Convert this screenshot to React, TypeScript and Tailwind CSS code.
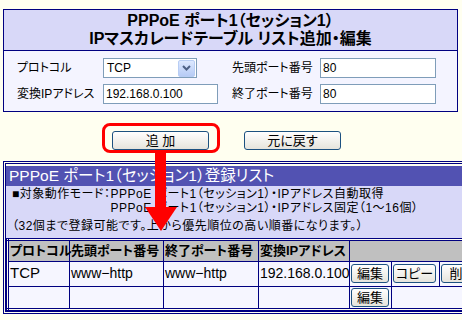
import React from 'react'

const font = "font-['Liberation_Sans','Noto_Sans_CJK_JP',sans-serif] [font-feature-settings:'palt']"

function XpButton({ label, className }: { label: string; className: string }) {
  return (
    <button
      className={`flex items-center justify-center rounded-[3px] border border-[#1c5180] bg-linear-to-b from-white to-[#e6e4dc] text-[13px] leading-none text-black ${className}`}
    >
      {label}
    </button>
  )
}

function Chevron() {
  return (
    <span className="flex h-[17px] w-[17px] items-center justify-center rounded-[2px] border border-[#b8cdf4] bg-linear-to-b from-[#dce8ff] to-[#b7cbf5]">
      <svg width="9" height="6" viewBox="0 0 9 6">
        <path d="M1 1 L4.5 4.5 L8 1" fill="none" stroke="#4d6185" strokeWidth="2" />
      </svg>
    </span>
  )
}

export default function App() {
  const td = 'border border-[#000080] px-[1px] whitespace-nowrap'
  return (
    <div className={`relative h-[320px] w-[462px] overflow-hidden bg-[#fffff0] ${font}`}>
      {/* edit form */}
      <div className="ml-[3px] mt-[9px] w-[455px] border border-[#000080]">
        <div className="flex h-[41px] flex-col items-center justify-center border-b border-[#000080] bg-[#d8d8f8] text-[16px] font-bold leading-[18px] text-black">
          <div>PPPoE ポート1（セッション1）</div>
          <div>IPマスカレードテーブル リスト追加・編集</div>
        </div>
        <div className="grid grid-cols-[86px_129px_88px_116px] gap-y-[6px] bg-[#f4f4ff] pb-[7px] pl-[13px] pt-[7px] text-[12px] text-black">
          <div className="flex items-center">プロトコル</div>
          <div className="flex h-[20px] w-[94px] items-center justify-between border border-[#7f9db9] bg-white pl-[3px] pr-[1px]">
            <span>TCP</span>
            <Chevron />
          </div>
          <div className="flex items-center">先頭ポート番号</div>
          <div className="flex h-[20px] items-center border border-[#7f9db9] bg-white pl-[2px]">80</div>
          <div className="flex items-center">変換IPアドレス</div>
          <div className="flex h-[20px] w-[115px] items-center border border-[#7f9db9] bg-white pl-[2px]">192.168.0.100</div>
          <div className="flex items-center">終了ポート番号</div>
          <div className="flex h-[20px] items-center border border-[#7f9db9] bg-white pl-[2px]">80</div>
        </div>
      </div>

      {/* buttons */}
      <div className="mt-[19px] flex gap-[35px] pl-[112px]">
        <XpButton label="追 加" className="h-[19px] w-[97px]" />
        <XpButton label="元に戻す" className="h-[19px] w-[97px]" />
      </div>

      {/* list */}
      <div className="ml-[3px] mt-[11px] w-[500px] border-[3px] border-double border-[#000080] pt-[2px]">
        <div className="flex h-[20px] items-center bg-[#5252b2] pl-[3px] text-[15.5px] leading-none text-white">
          PPPoE ポート1（セッション1）登録リスト
        </div>
        <div className="h-[52px] bg-[#d8d8f8] pl-[6px] pt-[1px] text-[12px] leading-[14px] tracking-[0.5px] text-black">
          <div>■対象動作モード：PPPoE ポート1（セッション1）・IPアドレス自動取得</div>
          <div>
            <span className="invisible">■対象動作モード：</span>PPPoE ポート1（セッション1）・IPアドレス固定（1〜16個）
          </div>
          <div className="mt-[4px]">（32個まで登録可能です。上から優先順位の高い順番になります。）</div>
        </div>
        <table className="w-[490px] table-fixed border-collapse border-[3px] border-double border-[#000080] text-black">
          <colgroup>
            <col className="w-[62px]" />
            <col className="w-[94px]" />
            <col className="w-[95px]" />
            <col className="w-[91px]" />
            <col className="w-[42px]" />
            <col className="w-[48px]" />
            <col />
          </colgroup>
          <tbody>
            <tr className="h-[21px] bg-[#c0c0c0] text-[13px] font-bold">
              <td className={td}>プロトコル</td>
              <td className={td}>先頭ポート番号</td>
              <td className={td}>終了ポート番号</td>
              <td className={td}>変換IPアドレス</td>
              <td className={td} colSpan={3}></td>
            </tr>
            <tr className="h-[25px] bg-[#f6f6ff] text-[14px]">
              <td className={`${td} text-[15px]`}>TCP</td>
              <td className={td}>www−http</td>
              <td className={td}>www−http</td>
              <td className={td}>192.168.0.100</td>
              <td className={td}>
                <XpButton label="編集" className="h-[19px] w-[38px]" />
              </td>
              <td className={td}>
                <XpButton label="コピー" className="h-[19px] w-[43px]" />
              </td>
              <td className={td}>
                <XpButton label="削除" className="h-[19px] w-[43px]" />
              </td>
            </tr>
            <tr className="h-[23px] bg-[#f6f6ff] text-[14px]">
              <td className={td}></td>
              <td className={td}></td>
              <td className={td}></td>
              <td className={td}></td>
              <td className={td}>
                <XpButton label="編集" className="h-[19px] w-[38px]" />
              </td>
              <td className={td} colSpan={2}></td>
            </tr>
          </tbody>
        </table>
      </div>

      {/* annotation: red box and arrow */}
      <div className="absolute left-[102px] top-[123px] h-[30px] w-[118px] rounded-[8px] border-[3px] border-[#ff0000]" />
      <svg className="absolute left-0 top-0" width="462" height="320" viewBox="0 0 462 320">
        <rect x="155" y="152" width="11" height="56" fill="#ff0000" />
        <polygon points="145,207 177,207 161,231" fill="#ff0000" />
      </svg>
    </div>
  )
}
